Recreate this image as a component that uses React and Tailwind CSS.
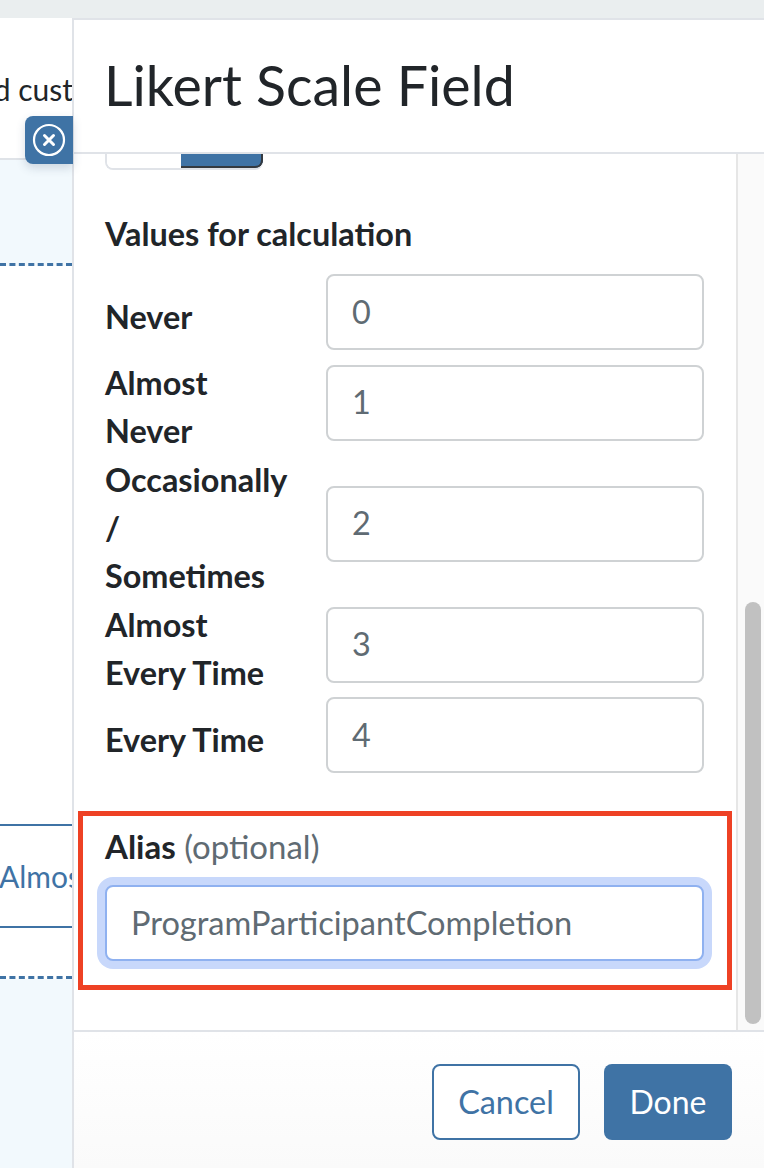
const rows = [
  { label: ["Never"], value: "0" },
  { label: ["Almost", "Never"], value: "1" },
  { label: ["Occasionally", "/", "Sometimes"], value: "2" },
  { label: ["Almost", "Every Time"], value: "3" },
  { label: ["Every Time"], value: "4" }
];

function CloseTab() {
  return (
    <button
      type="button"
      className="absolute left-[25px] top-[116px] z-20 flex h-[48px] w-[48px] items-center justify-center rounded-l-[8px] bg-[#3f73a5] shadow-[0_4px_10px_rgba(60,80,110,0.2)]"
    >
      <svg width="34" height="34" viewBox="0 0 34 34" fill="none" stroke="white">
        <circle cx="17" cy="17" r="15" strokeWidth="2.2" />
        <path d="M12.5 12.5 21.5 21.5M21.5 12.5 12.5 21.5" strokeWidth="3" strokeLinecap="round" />
      </svg>
    </button>
  );
}

function BackgroundPage() {
  return (
    <div className="flex w-[72px] shrink-0 flex-col overflow-hidden text-[30px]">
      <div className="h-[142px] shrink-0 border-b-2 border-[#dfe3e8] bg-white pt-[47px] leading-[48px] text-[#212529]">
        <p className="-ml-[38px] whitespace-nowrap">and customers</p>
      </div>
      <div className="h-[106px] shrink-0 border-b-[3px] border-dashed border-[#3f73a5] bg-[#f2f9fd]" />
      <div className="h-[558px] shrink-0 bg-white" />
      <div className="h-[104px] shrink-0 border-y-2 border-[#3f73a5] bg-white pt-[26px] leading-[48px] text-[#3f73a5]">
        <p className="-ml-px whitespace-nowrap">Almost</p>
      </div>
      <div className="h-[51px] shrink-0 border-b-[3px] border-dashed border-[#3f73a5] bg-white" />
      <div className="flex-1 bg-[#f2f9fd]" />
    </div>
  );
}

function ValueRow({ row, index }) {
  return (
    <div className={`flex items-center ${index === 1 || index === 4 ? "-mt-px" : ""}`}>
      <div className="w-[221px] shrink-0 pb-px text-[32.4px] font-bold leading-[48px] text-[#212529]">
        {row.label.map((line) => (
          <div key={line}>{line}</div>
        ))}
      </div>
      <div className="mb-[10px] flex-1">
        <input
          readOnly
          value={row.value}
          className="h-[76px] w-full rounded-[8px] border-2 border-[#cfd2d4] bg-white px-[24px] pb-[2px] text-[32.4px] text-[#5f6b73] outline-none"
        />
      </div>
    </div>
  );
}

export default function App() {
  return (
    <div className="flex h-[1168px] w-[764px] flex-col overflow-hidden bg-white font-['Lato',sans-serif]">
      <div className="h-[18px] shrink-0 bg-[#eaeeef]" />
      <div className="relative flex min-h-0 flex-1">
        <div className="absolute -top-[18px] left-0 h-[1168px] w-full">
          <div className="relative">
            <CloseTab />
          </div>
        </div>
        <BackgroundPage />

        <div className="flex min-w-0 flex-1 flex-col border-l-2 border-t-2 border-[#e0e3e8] bg-white">
          <div className="flex h-[134px] shrink-0 items-center border-b-2 border-[#e0e3e8] pb-[2px] pl-[30px]">
            <h1 className="text-[55.5px] leading-[64px] text-[#212529]">Likert Scale Field</h1>
          </div>

          <div className="flex min-h-0 flex-1 overflow-hidden">
            <div className="min-w-0 flex-1 pl-[31px] pr-[32px]">
              <div className="flex h-[16px] w-[158px] overflow-hidden rounded-b-[8px] border-b-2 border-l-2 border-[#e0e3e8]">
                <div className="w-[74px] bg-white" />
                <div className="flex-1 rounded-br-[8px] bg-[#3f73a5] shadow-[inset_0_-2px_0_#343a40,inset_-2px_0_0_#343a40]" />
              </div>
              <h2 className="mt-[40px] text-[32.4px] font-bold leading-[48px] text-[#212529]">
                Values for calculation
              </h2>
              <div className="mt-[16px]">
                {rows.map((row, index) => (
                  <ValueRow key={row.value} row={row} index={index} />
                ))}
              </div>

              <div className="relative mt-[39px]">
                <div className="text-[33px] leading-[48px] text-[#5f6b73]">
                  <span className="font-bold text-[#212529]">Alias</span> (optional)
                </div>
                <input
                  readOnly
                  value="ProgramParticipantCompletion"
                  className="mt-[15px] h-[76px] w-full rounded-[8px] border-2 border-[#8fb1f0] bg-white pl-[24px] pr-[25px] pb-[2px] text-[32.6px] text-[#5f6b73] shadow-[0_0_0_8px_#c8d8fb] outline-none"
                />
                <div className="pointer-events-none absolute -bottom-[29px] -left-[27px] -right-[28px] -top-[11px] border-[5px] border-[#ee4124]" />
              </div>
            </div>

            <div className="w-[28px] shrink-0 border-l-2 border-[#e6e6e6] bg-[#fafafa] pl-[7px] pt-[448px]">
              <div className="h-[422px] w-[16px] rounded-full bg-[#c1c1c1]" />
            </div>
          </div>

          <div className="flex h-[138px] shrink-0 items-start justify-end gap-[24px] border-t-2 border-[#e0e3e8] bg-gradient-to-b from-white to-[#fafafa] pr-[32px] pt-[32px]">
            <button
              type="button"
              className="h-[76px] w-[148px] rounded-[8px] border-2 border-[#3f73a5] bg-white text-[32.4px] text-[#3f73a5]"
            >
              Cancel
            </button>
            <button type="button" className="h-[76px] w-[128px] rounded-[8px] bg-[#3f73a5] text-[32px] text-white">
              Done
            </button>
          </div>
        </div>
      </div>
    </div>
  );
}
